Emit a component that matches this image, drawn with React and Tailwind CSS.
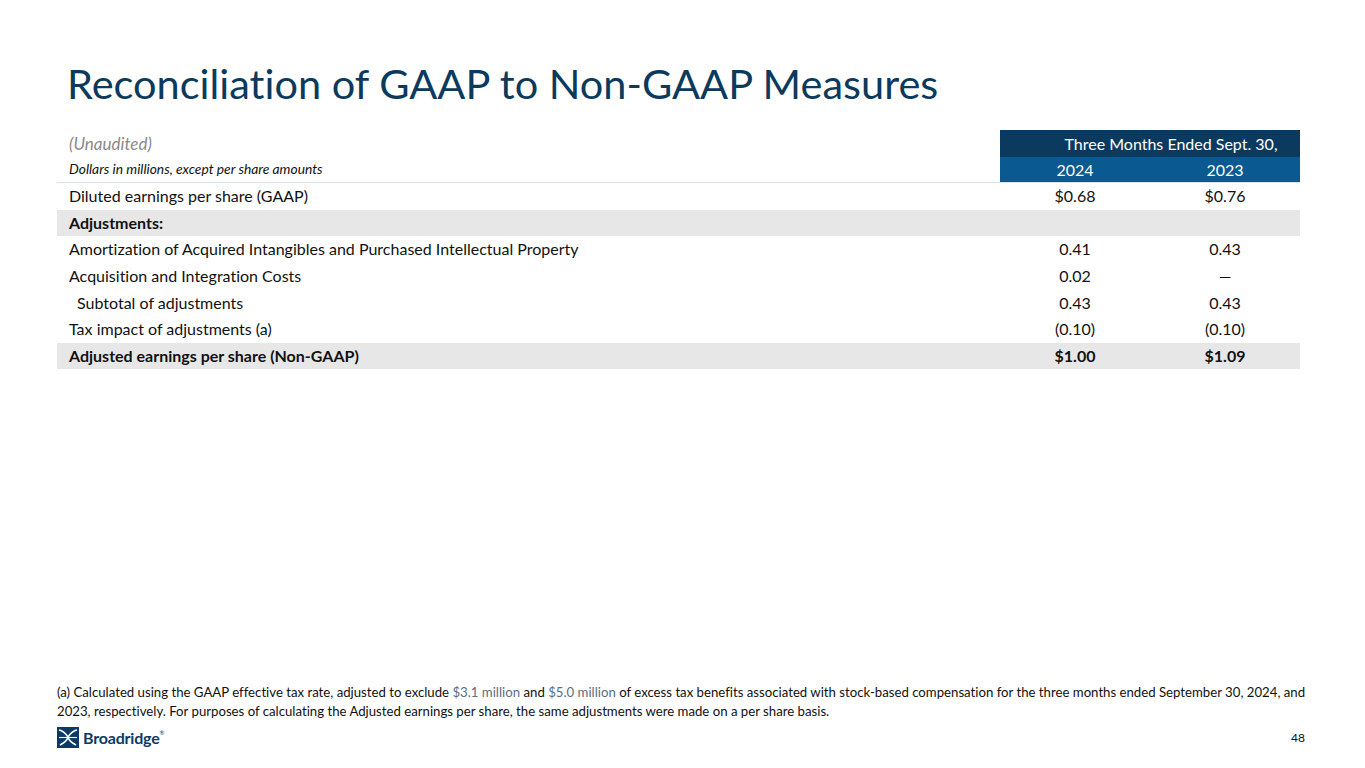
const font = { fontFamily: "Lato, 'Open Sans', sans-serif" };

const rows = [
  { label: "Diluted earnings per share (GAAP)", a: "$0.68", b: "$0.76" },
  { label: "Adjustments:", a: "", b: "", shade: true, bold: true },
  { label: "Amortization of Acquired Intangibles and Purchased Intellectual Property", a: "0.41", b: "0.43" },
  { label: "Acquisition and Integration Costs", a: "0.02", b: "—" },
  { label: "Subtotal of adjustments", a: "0.43", b: "0.43", indent: true },
  { label: "Tax impact of adjustments (a)", a: "(0.10)", b: "(0.10)" },
  { label: "Adjusted earnings per share (Non-GAAP)", a: "$1.00", b: "$1.09", shade: true, bold: true },
];

function Logo() {
  return (
    <div className="flex items-center gap-[4px]">
      <svg width="22" height="21" viewBox="0 0 22 21">
        <rect x="0" y="0" width="22" height="21" fill="#0b3a66" />
        <path d="M2 3 C7 4 9 7 11 10 C13 7 15 4 20 3" stroke="#fff" strokeWidth="1.5" fill="none" />
        <path d="M11 10 C10 14 7 16 3 18 M11 10 C12 14 15 16 19 18" stroke="#fff" strokeWidth="1.5" fill="none" />
        <path d="M2 10.5 L20 10.5" stroke="#fff" strokeWidth="1.1" fill="none" />
      </svg>
      <span className="text-[16px] font-bold leading-none text-[#0b3a66] tracking-[-0.2px]">
        Broadridge<span className="align-top text-[6px] font-normal">®</span>
      </span>
    </div>
  );
}

export default function App() {
  return (
    <div
      className="relative w-[1365px] h-[768px] bg-white overflow-hidden flex flex-col [font-variant-ligatures:none]"
      style={font}
    >
      <h1 className="ml-[67px] mt-[57px] text-[41.5px] leading-[52px] text-[#0b3a5c]">
        Reconciliation of GAAP to Non-GAAP Measures
      </h1>

      <div className="ml-[57px] mt-[21px] w-[1243px] text-[16px] text-[#111]">
        <div className="grid grid-cols-[1fr_300px] h-[27px] items-center">
          <div className="pl-[12px] italic text-[17px] text-[#8a8a8a]">(Unaudited)</div>
          <div className="bg-[#0b3a5e] h-full flex items-center justify-center pl-[42px] text-white">
            Three Months Ended Sept. 30,
          </div>
        </div>
        <div className="grid grid-cols-[1fr_150px_150px] h-[26px] items-center border-b border-[#d6e4f0]">
          <div className="pl-[12px] italic text-[13.8px] text-[#111]">Dollars in millions, except per share amounts</div>
          <div className="bg-[#0a5a91] h-full flex items-center justify-center text-white">2024</div>
          <div className="bg-[#0a5a91] h-full flex items-center justify-center text-white">2023</div>
        </div>
        {rows.map((r) => (
          <div
            key={r.label}
            className={`grid grid-cols-[1fr_150px_150px] h-[26.6px] items-center ${r.shade ? "bg-[#e7e7e7]" : ""} ${r.bold ? "font-bold" : ""}`}
          >
            <div className={r.indent ? "pl-[20px]" : "pl-[12px]"}>{r.label}</div>
            <div className="text-center">{r.a}</div>
            <div className="text-center">{r.b}</div>
          </div>
        ))}
      </div>

      <div className="flex-1" />

      <p className="ml-[57px] w-[1262px] text-[13.2px] leading-[19px] text-[#111]">
        (a) Calculated using the GAAP effective tax rate, adjusted to exclude <span className="text-[#5b6e80]">$3.1 million</span> and <span className="text-[#5b6e80]">$5.0 million</span> of excess tax benefits associated with stock-based
        compensation for the three months ended September 30, 2024, and 2023, respectively. For purposes of calculating
        the Adjusted earnings per share, the same adjustments were made on a per share basis.
      </p>

      <div className="ml-[57px] mr-[60px] mt-[6px] mb-[20px] flex items-center justify-between">
        <Logo />
        <span className="text-[12px] text-[#111]">48</span>
      </div>
    </div>
  );
}
